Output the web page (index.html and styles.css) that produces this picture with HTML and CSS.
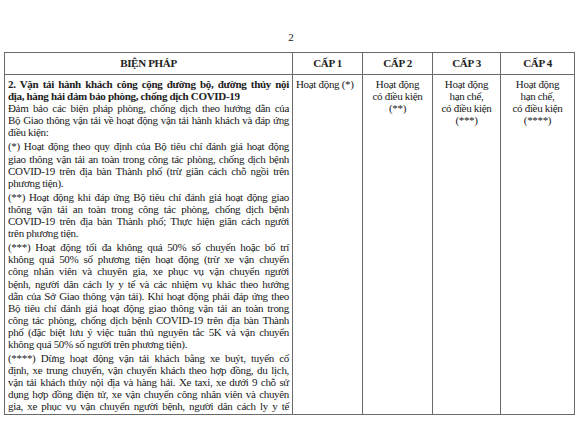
FILE: index.html
```html
<!DOCTYPE html>
<html lang="vi">
<head>
<meta charset="utf-8">
<title>Biện pháp</title>
<link rel="stylesheet" href="styles.css">
</head>
<body>
<div class="page">
  <div class="page-num">2</div>
  <table class="measures">
    <colgroup>
      <col class="c-main">
      <col class="c-lvl">
      <col class="c-lvl">
      <col class="c-lvl3">
      <col class="c-lvl4">
    </colgroup>
    <thead>
      <tr>
        <th>BIỆN PHÁP</th>
        <th>CẤP 1</th>
        <th>CẤP 2</th>
        <th>CẤP 3</th>
        <th>CẤP 4</th>
      </tr>
    </thead>
    <tbody>
      <tr>
        <td class="main">
          <div class="para title">
            <span class="ln">2. Vận tải hành khách công cộng đường bộ, đường thủy nội</span>
            <span class="ln last">địa, hàng hải đảm bảo phòng, chống dịch COVID-19</span>
          </div>
          <div class="para first">
            <span class="ln">Đảm bảo các biện pháp phòng, chống dịch theo hướng dẫn của</span>
            <span class="ln">Bộ Giao thông vận tải về hoạt động vận tải hành khách và đáp ứng</span>
            <span class="ln last">điều kiện:</span>
          </div>
          <div class="para">
            <span class="ln">(*) Hoạt động theo quy định của Bộ tiêu chí đánh giá hoạt động</span>
            <span class="ln">giao thông vận tải an toàn trong công tác phòng, chống dịch bệnh</span>
            <span class="ln">COVID-19 trên địa bàn Thành phố (trừ giãn cách chỗ ngồi trên</span>
            <span class="ln last">phương tiện).</span>
          </div>
          <div class="para">
            <span class="ln">(**) Hoạt động khi đáp ứng Bộ tiêu chí đánh giá hoạt động giao</span>
            <span class="ln">thông vận tải an toàn trong công tác phòng, chống dịch bệnh</span>
            <span class="ln">COVID-19 trên địa bàn Thành phố; Thực hiện giãn cách người</span>
            <span class="ln last">trên phương tiện.</span>
          </div>
          <div class="para">
            <span class="ln">(***) Hoạt động tối đa không quá 50% số chuyến hoặc bố trí</span>
            <span class="ln">không quá 50% số phương tiện hoạt động (trừ xe vận chuyển</span>
            <span class="ln">công nhân viên và chuyên gia, xe phục vụ vận chuyển người</span>
            <span class="ln">bệnh, người dân cách ly y tế và các nhiệm vụ khác theo hướng</span>
            <span class="ln">dẫn của Sở Giao thông vận tải). Khi hoạt động phải đáp ứng theo</span>
            <span class="ln">Bộ tiêu chí đánh giá hoạt động giao thông vận tải an toàn trong</span>
            <span class="ln">công tác phòng, chống dịch bệnh COVID-19 trên địa bàn Thành</span>
            <span class="ln">phố (đặc biệt lưu ý việc tuân thủ nguyên tắc 5K và vận chuyển</span>
            <span class="ln last">không quá 50% số người trên phương tiện).</span>
          </div>
          <div class="para">
            <span class="ln">(****) Dừng hoạt động vận tải khách bằng xe buýt, tuyến cố</span>
            <span class="ln">định, xe trung chuyển, vận chuyển khách theo hợp đồng, du lịch,</span>
            <span class="ln">vận tải khách thủy nội địa và hàng hải. Xe taxi, xe dưới 9 chỗ sử</span>
            <span class="ln">dụng hợp đồng điện tử, xe vận chuyển công nhân viên và chuyên</span>
            <span class="ln">gia, xe phục vụ vận chuyển người bệnh, người dân cách ly y tế</span>
          </div>
        </td>
        <td class="lvl lvl1">Hoạt động (*)</td>
        <td class="lvl">Hoạt động<br>có điều kiện<br>(**)</td>
        <td class="lvl">Hoạt động<br>hạn chế,<br>có điều kiện<br>(***)</td>
        <td class="lvl">Hoạt động<br>hạn chế,<br>có điều kiện<br>(****)</td>
      </tr>
    </tbody>
  </table>
</div>
</body>
</html>
```

FILE: styles.css
```css
html, body {
  margin: 0;
  padding: 0;
  background: #ffffff;
}

body {
  font-family: "Liberation Serif", "Times New Roman", serif;
  color: #202020;
  font-size: 11px;
}

.page {
  width: 580px;
  height: 438px;
  padding-top: 30px;
  box-sizing: border-box;
  overflow: hidden;
}

.page-num {
  text-align: center;
  font-size: 11px;
  line-height: 14px;
  padding-left: 2px;
}

.measures {
  margin: 8px 0 0 4px;
  width: 570px;
  border-collapse: collapse;
  table-layout: fixed;
  letter-spacing: -0.32px;
}

.c-main { width: 288px; }
.c-lvl { width: 70px; }
.c-lvl3 { width: 68px; }
.c-lvl4 { width: 74px; }

.measures th,
.measures td {
  border: 1px solid #6a6a6a;
}

.measures th {
  font-weight: bold;
  font-size: 11px;
  line-height: 13px;
  height: 22px;
  padding: 0;
  text-align: center;
  vertical-align: middle;
  box-sizing: border-box;
}

.measures td {
  vertical-align: top;
  padding: 3px 3px 1px 3px;
  line-height: 12.1px;
}

.main .ln {
  display: block;
  text-align: justify;
  text-align-last: justify;
}

.main .ln.last {
  text-align-last: left;
}

.main .title {
  font-weight: bold;
}

.main .para + .para {
  margin-top: 2px;
}

.main .para.first {
  margin-top: 0;
}

.lvl {
  text-align: center;
  padding-left: 1px;
  padding-right: 1px;
}

.lvl1 {
  white-space: nowrap;
  text-align: left;
  padding-left: 3px;
}
```
